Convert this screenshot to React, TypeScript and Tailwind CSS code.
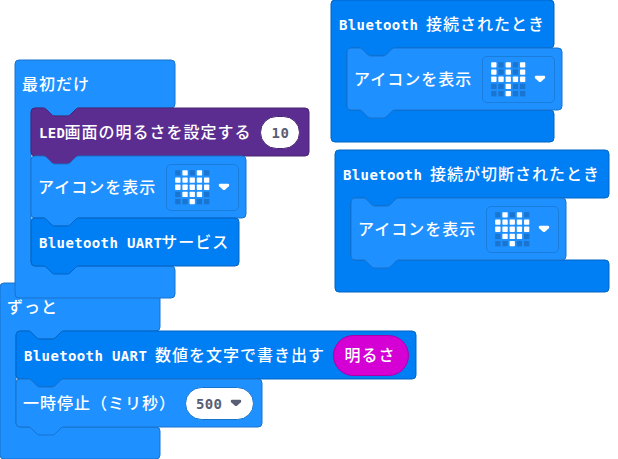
import type { ReactNode } from "react";

const NOTCH_RIGHT = "c2 0 3 1 4 2 l4 4 c1 1 2 2 4 2 h12 c2 0 3 -1 4 -2 l4 -4 c1 -1 2 -2 4 -2";
const NOTCH_LEFT = "c-2 0 -3 1 -4 2 l-4 4 c-1 1 -2 2 -4 2 h-12 c-2 0 -3 -1 -4 -2 l-4 -4 c-1 -1 -2 -2 -4 -2";

function statementPath(w: number, h: number) {
  return `M0 4 a4 4 0 0 1 4 -4 h8 ${NOTCH_RIGHT} H${w - 4} a4 4 0 0 1 4 4 V${h - 4} a4 4 0 0 1 -4 4 H48 ${NOTCH_LEFT} h-8 a4 4 0 0 1 -4 -4 Z`;
}

function eventPath(w: number, inner: number) {
  const b = 48 + inner;
  return `M0 4 a4 4 0 0 1 4 -4 H${w - 4} a4 4 0 0 1 4 4 V44 a4 4 0 0 1 -4 4 H64 ${NOTCH_LEFT} h-8 a4 4 0 0 0 -4 4 V${b - 4} a4 4 0 0 0 4 4 H${w - 4} a4 4 0 0 1 4 4 V${b + 28} a4 4 0 0 1 -4 4 H4 a4 4 0 0 1 -4 -4 Z`;
}

const COLORS = {
  basic: ["#1e90ff", "#1873cc"],
  bluetooth: ["#007ef4", "#0065c3"],
  led: ["#5c2d91", "#492474"],
} as const;
type Kind = keyof typeof COLORS;

function Shape({ d, kind }: { d: string; kind: Kind }) {
  return (
    <svg className="pointer-events-none absolute inset-0 size-full overflow-visible" aria-hidden="true">
      <path d={d} fill={COLORS[kind][0]} stroke={COLORS[kind][1]} />
    </svg>
  );
}

function Latin({ children }: { children: ReactNode }) {
  return (
    <span className="relative top-px whitespace-pre font-['DejaVu_Sans_Mono',monospace] text-[14px] font-bold tracking-[0.37px]">
      {children}
    </span>
  );
}

function Ja({ children }: { children: ReactNode }) {
  return (
    <span className="relative -top-px -left-px whitespace-pre font-['Noto_Sans_CJK_JP',sans-serif] text-[16px] font-medium tracking-[1px]">
      {children}
    </span>
  );
}

function Label({ latin, ja }: { latin?: string; ja?: string }) {
  return (
    <span className="relative flex h-6 items-center leading-6 text-white">
      {latin && <Latin>{latin}</Latin>}
      {ja && <Ja>{ja}</Ja>}
    </span>
  );
}

function Arrow({ className }: { className: string }) {
  return (
    <svg className={className} width="12" height="8" viewBox="0 0 12 8" aria-hidden="true">
      <path d="M2 0.8 H10 C11.4 0.8 11.6 2.4 10.8 3.2 L7.3 6.5 Q6 7.5 4.7 6.5 L1.2 3.2 C0.4 2.4 0.6 0.8 2 0.8Z" fill="currentColor" />
    </svg>
  );
}

const HEART = [".#.#.", "#####", "#####", ".###.", "..#.."];
const FORK = ["#.#.#", "#.#.#", "#####", "..#..", "..#.."];

function IconField({ rows }: { rows: string[] }) {
  return (
    <span className="relative ml-px flex h-[47px] w-[73px] items-center justify-between rounded-[5px] border border-[#1a7ddc] pr-2 pl-2">
      <svg width="35" height="35" viewBox="0 0 35 35" aria-hidden="true">
        {rows.flatMap((row, y) =>
          [...row].map((c, x) => (
            <rect key={`${x}-${y}`} x={0.2 + x * 7.2} y={0.2 + y * 7.2} width="5.3" height="5.3" rx={c === "#" ? 0.7 : 0} fill={c === "#" ? "#fff" : "#1a75d0"} />
          )),
        )}
      </svg>
      <Arrow className="text-white" />
    </span>
  );
}

function Statement({ kind, w, h = 48, children }: { kind: Kind; w: number; h?: number; children: ReactNode }) {
  return (
    <div className="relative flex items-center gap-2 pl-2" style={{ width: w, height: h }}>
      <Shape d={statementPath(w, h)} kind={kind} />
      {children}
    </div>
  );
}

function EventBlock({ kind, w, inner, place, title, children }: { kind: Kind; w: number; inner: number; place: string; title: ReactNode; children: ReactNode }) {
  return (
    <section className={`absolute ${place}`} style={{ width: w, height: inner + 80 }}>
      <Shape d={eventPath(w, inner)} kind={kind} />
      <header className="relative flex h-12 items-center pl-2">{title}</header>
      <div className="flex flex-col pl-4">{children}</div>
    </section>
  );
}

export default function App() {
  return (
    <main className="relative h-[459px] w-[618px] overflow-hidden bg-white">
      <EventBlock kind="basic" w={160} inner={96} place="left-0 top-[283px]" title={<Label ja="ずっと" />}>
        <Statement kind="bluetooth" w={400}>
          <Label latin="Bluetooth UART " ja="数値を文字で書き出す" />
          <span className="relative -ml-px flex h-[41px] w-[76px] items-center justify-center rounded-full border border-[#aa00aa] bg-[#d400d4] text-white">
            <Ja>明るさ</Ja>
          </span>
        </Statement>
        <Statement kind="basic" w={246}>
          <Label ja="一時停止（ミリ秒）" />
          <span className="relative flex h-[33px] w-[69px] items-center justify-between rounded-full border border-[#1873cc] bg-white pr-[11px] pl-[10px] text-[#575e75]">
            <Latin>500</Latin>
            <Arrow className="" />
          </span>
        </Statement>
      </EventBlock>

      <EventBlock kind="basic" w={160} inner={158} place="left-[15px] top-[60px]" title={<Label ja="最初だけ" />}>
        <Statement kind="led" w={278}>
          <Label latin="LED" ja="画面の明るさを設定する" />
          <span className="relative flex h-[33px] w-10 items-center justify-center rounded-full border border-[#492474] bg-white text-[#575e75]">
            <Latin>10</Latin>
          </span>
        </Statement>
        <Statement kind="basic" w={215} h={62}>
          <Label ja="アイコンを表示" />
          <IconField rows={HEART} />
        </Statement>
        <Statement kind="bluetooth" w={208}>
          <Label latin="Bluetooth UART" ja="サービス" />
        </Statement>
      </EventBlock>

      <EventBlock kind="bluetooth" w={223} inner={62} place="left-[331px] top-0" title={<Label latin="Bluetooth " ja="接続されたとき" />}>
        <Statement kind="basic" w={215} h={62}>
          <Label ja="アイコンを表示" />
          <IconField rows={FORK} />
        </Statement>
      </EventBlock>

      <EventBlock kind="bluetooth" w={274} inner={62} place="left-[335px] top-[150px]" title={<Label latin="Bluetooth " ja="接続が切断されたとき" />}>
        <Statement kind="basic" w={215} h={62}>
          <Label ja="アイコンを表示" />
          <IconField rows={HEART} />
        </Statement>
      </EventBlock>
    </main>
  );
}
